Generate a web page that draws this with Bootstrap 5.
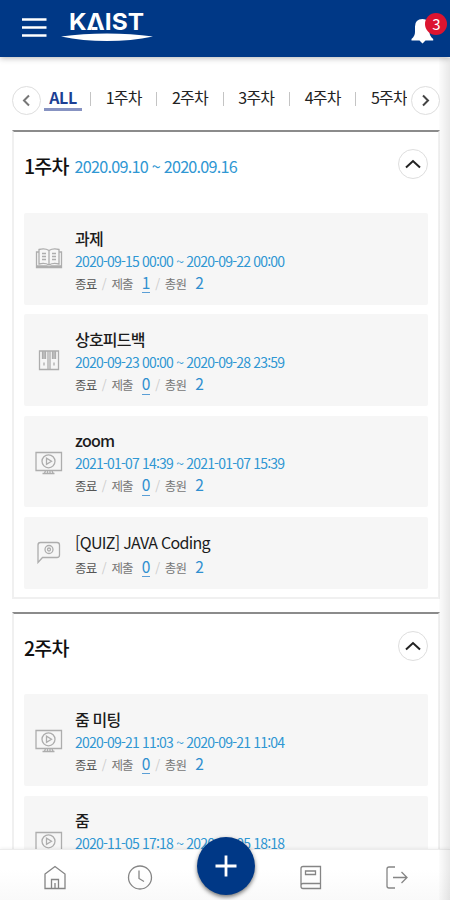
<!DOCTYPE html>
<html lang="ko">
<head>
<meta charset="utf-8">
<meta name="viewport" content="width=device-width, initial-scale=1">
<title>KAIST</title>
<link href="https://cdn.jsdelivr.net/npm/bootstrap@5.3.0/dist/css/bootstrap.min.css" rel="stylesheet">
<style>
  html, body { height: 900px; overflow: hidden; }
  body { font-family: "Noto Sans CJK KR", "Noto Sans", sans-serif; letter-spacing: -.05em; color: #1c1c1c; background: #fff; }
  .screen { width: 450px; height: 900px; }
  .edge { top: 58px; right: 0; width: 11px; bottom: 0; background: linear-gradient(90deg, rgba(0,0,0,.01), rgba(0,0,0,.09)); z-index: 6; }
  .topbar { height: 57px; background: #003886; box-shadow: 0 1px 6px rgba(0,0,0,.3); z-index: 2; flex: none; }
  .menu-btn { margin: 17px 0 0 21px; }
  .brand { margin: 4px 0 0 14px; overflow: visible; }
  .bell { margin: 18px 16px 0 0; }
  .bell svg { display: block; }
  .count { left: 14px; top: -5px; width: 22px; height: 22px; background: #dc1430; font-size: 15px; line-height: 22px; }
  .tabs-row { height: 74px; padding: 25px 10px 0 12px; flex: none; }
  .round { width: 29px; height: 29px; border: 1px solid #dedede; background: #fff; flex: none; border-radius: 50%; }
  .tabs-row .round { margin-top: 4px; }
  .week-tab { font-size: 16px; line-height: 28px; height: 28px; color: #222; white-space: nowrap; margin-top: 1px; }
  .week-tab.current { font-weight: 700; letter-spacing: -.03em; color: #1c3f94; border-bottom: 3px solid #8793c2; width: 38px; text-align: center; margin-left: 3px; }
  .bar { width: 1px; height: 14px; background: #c4c4c4; margin-top: 10px; flex: none; }
  .week { width: 428px; margin-left: 12px; border: 2px solid #f0f0f0; border-top: 2px solid #8b8b8b; padding: 0 10px 8px; flex: none; margin-top: -.6px; }
  .week + .week { margin-top: 12.5px; }
  .week-head { height: 80.8px; padding: 17px 0 0 0; }
  .week-head .round { width: 30px; height: 30px; }
  .week-title { font-size: 19.5px; line-height: 34px; font-weight: 500; color: #111; margin: 0; }
  .range { font-size: 16.2px; letter-spacing: -.047em; line-height: 35px; color: #2f97d3; margin-left: 6px; }
  .items { gap: 9.6px; }
  .item { height: 91.7px; background: #f6f6f6; border-radius: 2px; padding-top: 12.6px; }
  .item.short { height: 72px; }
  .ico { width: 51px; flex: none; padding: 22.5px 0 0 11px; }
  .short .ico { padding-top: 6.5px; }
  .ico svg { display: block; stroke: #adadad; fill: none; stroke-width: 1.3; }
  .name { font-size: 16px; line-height: 25px; font-weight: 500; color: #1c1c1c; }
  .short .name { letter-spacing: -.043em; }
  .when { font-size: 14px; line-height: 20px; color: #2f97d3; white-space: nowrap; }
  .state { font-size: 12.5px; line-height: 25px; color: #777; white-space: nowrap; }
  .state .st { color: #555; }
  .state i { font-style: normal; color: #ccc; width: 15px; text-align: center; }
  .state b { font-weight: 400; font-size: 15.5px; color: #2f8fd0; line-height: 19px; height: 20.500px; margin: 2px 0 0 9px; width: 8px; }
  .state b.sub { border-bottom: 1px solid #5b9fd6; }
  .bottombar { left: 0; top: 849px; width: 450px; height: 51px; background: linear-gradient(#fff 40%, #f9f9f9); border-top: 1px solid #ececec; box-shadow: 0 -1px 3px rgba(0,0,0,.06); z-index: 4; }
  .bottombar svg { stroke: #858585; fill: none; stroke-width: 1.3; }
  .bottombar > div { width: 85.5px; padding: 13px 0 0 1px; }
  .fab { left: 197px; top: 837px; width: 58px; height: 58px; background: #003886; box-shadow: 0 2px 4px rgba(0,0,0,.55); z-index: 5; }
</style>
</head>
<body>
<svg width="0" height="0" class="position-absolute">
  <symbol id="video" viewBox="0 0 28 24"><path d="M1 1.500h25.500v18H1zM9 23l1.500-3M18.500 23 17 20M7.500 22.500h12M12.500 20v3M15 20v3"/><circle cx="13.500" cy="10.300" r="6.500"/><path d="M11.500 7.200v6.200l5-3.100z"/></symbol>
  <symbol id="up" viewBox="0 0 16 10"><path d="M1 8.500 8 2l7 6.500" fill="none" stroke="#222" stroke-width="2"/></symbol>
</svg>
<div class="screen position-relative overflow-hidden d-flex flex-column">
  <header class="topbar d-flex align-items-start position-relative">
    <svg class="menu-btn" width="26" height="21" stroke="#fff" stroke-width="2.600"><path d="M1 2.500h24.500M1 10.500h24.500M1 18.500h24.500"/></svg>
    <svg class="brand" width="93" height="40" viewBox="0 0 93 40">
      <text x="8" y="26" fill="#fff" font-family="Inter, sans-serif" font-weight="700" font-size="23" textLength="75" lengthAdjust="spacingAndGlyphs" letter-spacing="0">KΛIST</text>
      <path d="M0 32.500Q22 29.500 46 29.500T92 32.500Q70 37 46 37T0 32.500z" fill="#fff"/>
      <path d="M30.500 23h6v3h-6z" fill="#fff"/>
    </svg>
    <div class="bell ms-auto position-relative">
      <svg width="23" height="26" viewBox="0 0 23 26" fill="#fff"><path d="M11.500 1C15.700 1 18.500 4.200 18.500 8.500V14q0 4 3.700 7v1.500H14.500L11.500 25.500 8.500 22.500H.5V21Q4 18 4 14V8.500Q4 1 11.500 1z"/></svg>
      <span class="count rounded-circle position-absolute text-white text-center">3</span>
    </div>
  </header>
  <nav class="tabs-row d-flex align-items-start">
    <div class="round d-flex align-items-center justify-content-center"><svg width="9" height="13" fill="none" stroke="#777" stroke-width="2"><path d="M7 1.500 2 6.500l5 5"/></svg></div>
    <div class="week-tab current">ALL</div>
    <div class="d-flex flex-grow-1 justify-content-between overflow-hidden ps-2">
      <div class="bar"></div><div class="week-tab">1주차</div>
      <div class="bar"></div><div class="week-tab">2주차</div>
      <div class="bar"></div><div class="week-tab">3주차</div>
      <div class="bar"></div><div class="week-tab">4주차</div>
      <div class="bar"></div><div class="week-tab">5주차</div>
    </div>
    <div class="round ms-1 d-flex align-items-center justify-content-center"><svg width="9" height="13" fill="none" stroke="#444" stroke-width="2"><path d="M2 1.500 7 6.500l-5 5"/></svg></div>
  </nav>
  <section class="week">
    <div class="week-head d-flex align-items-start">
      <h2 class="week-title">1주차</h2><span class="range">2020.09.10 ~ 2020.09.16</span>
      <div class="round ms-auto d-flex align-items-center justify-content-center"><svg width="16" height="10"><use href="#up"/></svg></div>
    </div>
    <div class="items d-flex flex-column">
      <div class="item d-flex">
        <div class="ico"><svg width="28" height="22" viewBox="0 0 28 22"><path d="M4 1.500Q10 0 14 2.500 18 0 24 1.500V16Q18 14.500 14 17 10 14.500 4 16zM14 2.500V17M4 4H1.500v15.500h25V4H24M2 18h10l2 1 2-1h10M7 5.500h4M7 8.500h4M7 11.500h4M17 5.500h4M17 8.500h4M17 11.500h4"/></svg></div>
        <div><div class="name">과제</div><div class="when">2020-09-15 00:00 ~ 2020-09-22 00:00</div>
        <div class="state d-flex"><span class="st">종료</span><i>/</i><span>제출</span><b class="sub">1</b><i>/</i><span>총원</span><b>2</b></div></div>
      </div>
      <div class="item d-flex">
        <div class="ico"><svg width="28" height="21" viewBox="0 0 28 21"><path d="M4.500 1h19v18.500h-19zM13 1v18.500M15 1v18.500M7.500 1v8M9 1v8M10.500 1v8M17.500 1v8M19 1v8M20.500 1v8M9 12.500v3M19 12.500v3"/></svg></div>
        <div><div class="name">상호피드백</div><div class="when">2020-09-23 00:00 ~ 2020-09-28 23:59</div>
        <div class="state d-flex"><span class="st">종료</span><i>/</i><span>제출</span><b class="sub">0</b><i>/</i><span>총원</span><b>2</b></div></div>
      </div>
      <div class="item d-flex">
        <div class="ico"><svg width="28" height="24"><use href="#video"/></svg></div>
        <div><div class="name">zoom</div><div class="when">2021-01-07 14:39 ~ 2021-01-07 15:39</div>
        <div class="state d-flex"><span class="st">종료</span><i>/</i><span>제출</span><b class="sub">0</b><i>/</i><span>총원</span><b>2</b></div></div>
      </div>
      <div class="item short d-flex">
        <div class="ico"><svg width="28" height="28" viewBox="0 0 28 28"><path d="M3 26.500V9Q3 6.500 5.500 6.500H22q2.500 0 2.500 2.500v10Q24.500 21.500 22 21.500H7.500z"/><circle cx="14" cy="13.500" r="4"/><circle cx="14" cy="13.500" r="1.500"/></svg></div>
        <div><div class="name fw-normal">[QUIZ] JAVA Coding</div>
        <div class="state d-flex"><span class="st">종료</span><i>/</i><span>제출</span><b class="sub">0</b><i>/</i><span>총원</span><b>2</b></div></div>
      </div>
    </div>
  </section>
  <section class="week">
    <div class="week-head d-flex align-items-start">
      <h2 class="week-title">2주차</h2>
      <div class="round ms-auto d-flex align-items-center justify-content-center"><svg width="16" height="10"><use href="#up"/></svg></div>
    </div>
    <div class="items d-flex flex-column">
      <div class="item d-flex">
        <div class="ico"><svg width="28" height="24"><use href="#video"/></svg></div>
        <div><div class="name">줌 미팅</div><div class="when">2020-09-21 11:03 ~ 2020-09-21 11:04</div>
        <div class="state d-flex"><span class="st">종료</span><i>/</i><span>제출</span><b class="sub">0</b><i>/</i><span>총원</span><b>2</b></div></div>
      </div>
      <div class="item d-flex">
        <div class="ico"><svg width="28" height="24"><use href="#video"/></svg></div>
        <div><div class="name">줌</div><div class="when">2020-11-05 17:18 ~ 2020-11-05 18:18</div></div>
      </div>
    </div>
  </section>
  <div class="edge position-absolute"></div>
  <footer class="bottombar position-absolute d-flex justify-content-center">
    <div class="text-center"><svg width="24" height="25"><path d="M2 9 12 1.500 22 9v14.500H2zM8.500 23.500V14.500h7v9M12 18v5.500"/></svg></div>
    <div class="text-center"><svg width="26" height="25"><circle cx="13" cy="12.500" r="11.500"/><path d="M12 5.500v8l5 3"/></svg></div>
    <div></div>
    <div class="text-center"><svg width="24" height="25"><path d="M4 1.500h17.500v22H4Q2 23.500 2 21.500V3.500Q2 1.500 4 1.500zM2 20.500q0-2 2-2h17.500M6.500 6h10v3.500h-10z"/></svg></div>
    <div class="text-center"><svg width="24" height="25"><path d="M10 2H4Q2 2 2 4v17q0 2 2 2h6M8 12.500h14M16.500 7l5.500 5.500-5.500 5.500"/></svg></div>
  </footer>
  <div class="fab position-absolute rounded-circle d-flex align-items-center justify-content-center"><svg width="22" height="22" stroke="#fff" stroke-width="2.800"><path d="M11 0.500v21M.5 11h21"/></svg></div>
</div>
<script src="https://cdn.jsdelivr.net/npm/bootstrap@5.3.0/dist/js/bootstrap.bundle.min.js"></script>
</body>
</html>
